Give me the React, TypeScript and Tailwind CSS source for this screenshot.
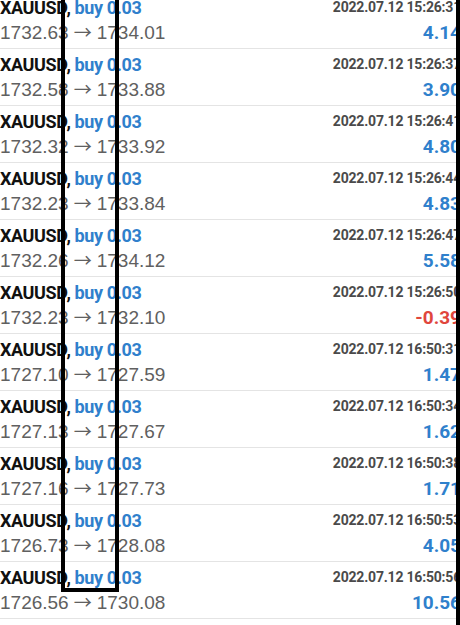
const trades = [
  { time: '2022.07.12 15:26:31', open: '1732.63', close: '1734.01', profit: '4.14' },
  { time: '2022.07.12 15:26:37', open: '1732.58', close: '1733.88', profit: '3.90' },
  { time: '2022.07.12 15:26:41', open: '1732.32', close: '1733.92', profit: '4.80' },
  { time: '2022.07.12 15:26:44', open: '1732.23', close: '1733.84', profit: '4.83' },
  { time: '2022.07.12 15:26:47', open: '1732.26', close: '1734.12', profit: '5.58' },
  { time: '2022.07.12 15:26:50', open: '1732.23', close: '1732.10', profit: '-0.39' },
  { time: '2022.07.12 16:50:31', open: '1727.10', close: '1727.59', profit: '1.47' },
  { time: '2022.07.12 16:50:34', open: '1727.13', close: '1727.67', profit: '1.62' },
  { time: '2022.07.12 16:50:38', open: '1727.16', close: '1727.73', profit: '1.71' },
  { time: '2022.07.12 16:50:53', open: '1726.73', close: '1728.08', profit: '4.05' },
  { time: '2022.07.12 16:50:56', open: '1726.56', close: '1730.08', profit: '10.56' },
]

function TradeRow({ t }: { t: (typeof trades)[number] }) {
  const loss = t.profit.startsWith('-')
  return (
    <div className="flex h-[57px] items-start justify-between border-b border-[#e4e4e4] pt-[5px]">
      <div className="flex flex-col">
        <div className="h-[22px] text-[18px] leading-[22px] font-bold tracking-[-0.4px] font-['Roboto',sans-serif]">
          <span className="text-[#111]">XAUUSD</span>
          <span className="text-[#111]">, </span>
          <span className="text-[#2f80cc]">buy 0.03</span>
        </div>
        <div className="mt-[1px] flex h-[22px] items-baseline gap-[5px] text-[19px] leading-[22px] text-[#606060] font-['Liberation_Sans',sans-serif]">
          <span>{t.open}</span>
          <span className="text-[18px] leading-[22px] font-['Noto_Sans_CJK_SC',sans-serif]">→</span>
          <span>{t.close}</span>
        </div>
      </div>
      <div className="mr-[-1px] flex flex-col items-end">
        <div className="h-[20px] text-[14px] leading-[20px] font-bold tracking-[-0.2px] text-[#4a4a4a] font-['Roboto',sans-serif]">
          {t.time}
        </div>
        <div
          className={
            loss
              ? 'mt-[5px] h-[22px] text-[19px] leading-[22px] font-bold text-[#e0463c] font-["Roboto",sans-serif]'
              : 'mt-[5px] h-[22px] text-[19px] leading-[22px] font-bold text-[#2f80cc] font-["Roboto",sans-serif]'
          }
        >
          {t.profit}
        </div>
      </div>
    </div>
  )
}

export default function App() {
  return (
    <div className="relative h-[625px] w-[460px] overflow-hidden bg-white">
      <div className="mt-[-8px] flex flex-col">
        {trades.map((t) => (
          <TradeRow key={t.time} t={t} />
        ))}
      </div>
      {/* hand-drawn highlight box */}
      <div className="absolute top-[-10px] left-[61px] h-[602px] w-[58px] border-[4px] border-black" />
      <div className="absolute top-0 right-0 bottom-0 w-[4px] bg-black" />
    </div>
  )
}
